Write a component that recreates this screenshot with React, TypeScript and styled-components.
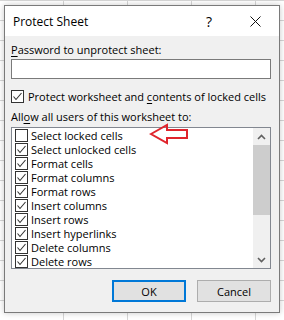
import React from "react";
import styled, { createGlobalStyle } from "styled-components";

const Global = createGlobalStyle`
  html, body { margin: 0; padding: 0; }
  body {
    font-family: "Open Sans", "Noto Sans", sans-serif;
    font-size: 11px;
    color: #000;
    background-color: #ffffff;
    background-image:
      linear-gradient(to right, #d6d6d6 1px, transparent 1px),
      linear-gradient(to bottom, #d6d6d6 1px, transparent 1px);
    background-size: 64px 20px;
    background-position: 63px 0;
  }
`;

const Page = styled.div`
  width: 284px;
  height: 320px;
  padding: 5px 0 0 4px;
  box-sizing: border-box;
  overflow: hidden;
`;

const Dialog = styled.div`
  width: 276px;
  height: 308px;
  box-sizing: border-box;
  border: 1px solid #7a7a7a;
  background: #f0f0f0;
  box-shadow: 0 0 6px rgba(0, 0, 0, 0.22);
  display: flex;
  flex-direction: column;
`;

const TitleBar = styled.div`
  height: 30px;
  background: #ffffff;
  display: flex;
  align-items: center;
  padding-left: 8px;
  padding-top: 1px;
  box-sizing: border-box;
`;

const Title = styled.div`
  flex: 1;
  font-size: 12px;
`;

const HelpButton = styled.div`
  width: 30px;
  margin-right: 8px;
  text-align: center;
  font-size: 14px;
`;

const CloseButton = styled.div`
  width: 46px;
  margin-right: 1px;
  display: flex;
  align-items: center;
  justify-content: center;
`;

const Body = styled.div`
  flex: 1;
  display: flex;
  flex-direction: column;
  padding: 7px 8px 0 6px;
`;

const Label = styled.div<{ $mt?: number }>`
  height: 14px;
  line-height: 14px;
  margin-top: ${(p) => p.$mt ?? 0}px;
  white-space: nowrap;
`;

const Key = styled.span`
  text-decoration: underline;
  text-underline-offset: 2px;
`;

const TextInput = styled.div`
  margin-top: 2px;
  height: 20px;
  box-sizing: border-box;
  border: 1px solid #7a7a7a;
  background: #ffffff;
`;

const CheckRow = styled.div`
  margin-top: 9px;
  height: 16px;
  display: flex;
  align-items: center;
  gap: 4px;
  white-space: nowrap;
`;

const Box = styled.span`
  width: 13px;
  height: 13px;
  box-sizing: border-box;
  border: 1px solid #333333;
  background: #ffffff;
  flex: none;
  display: flex;
  align-items: center;
  justify-content: center;
`;

const ListBox = styled.div`
  position: relative;
  margin-top: 3px;
  height: 142px;
  box-sizing: border-box;
  border: 1px solid #828790;
  background: #ffffff;
  display: flex;
`;

const Items = styled.div`
  flex: 1;
  display: flex;
  flex-direction: column;
`;

const Item = styled.div`
  height: 14px;
  display: flex;
  align-items: center;
  gap: 3px;
  padding-left: 3px;
  white-space: nowrap;
`;

const ScrollBar = styled.div`
  width: 17px;
  background: #f0f0f0;
  display: flex;
  flex-direction: column;
`;

const ScrollArrow = styled.div`
  height: 17px;
  display: flex;
  align-items: center;
  justify-content: center;
`;

const Track = styled.div`
  flex: 1;
  display: flex;
  flex-direction: column;
`;

const Thumb = styled.div`
  height: 70px;
  background: #cdcdcd;
`;

const Pointer = styled.svg`
  position: absolute;
  left: 137px;
  top: -5px;
`;

const ButtonRow = styled.div`
  margin-top: 11px;
  display: flex;
  justify-content: flex-end;
  gap: 11px;
`;

const Button = styled.div<{ $default?: boolean }>`
  width: 74px;
  height: 22px;
  box-sizing: border-box;
  border: ${(p) => (p.$default ? "2px solid #0078d7" : "1px solid #adadad")};
  background: #e1e1e1;
  display: flex;
  align-items: center;
  justify-content: center;
`;

const Check = () => (
  <svg width="11" height="11" viewBox="0 0 11 11">
    <polyline points="1.5,5.5 4,8.5 9.5,2" fill="none" stroke="#333" strokeWidth="1.1" />
  </svg>
);

const items: [string, boolean][] = [
  ["Select locked cells", false],
  ["Select unlocked cells", true],
  ["Format cells", true],
  ["Format columns", true],
  ["Format rows", true],
  ["Insert columns", true],
  ["Insert rows", true],
  ["Insert hyperlinks", true],
  ["Delete columns", true],
  ["Delete rows", true],
];

export default function App() {
  return (
    <>
      <Global />
      <Page>
        <Dialog>
          <TitleBar>
            <Title>Protect Sheet</Title>
            <HelpButton>?</HelpButton>
            <CloseButton>
              <svg width="11" height="11" viewBox="0 0 11 11">
                <path d="M0.5,0.5 L10.5,10.5 M10.5,0.5 L0.5,10.5" stroke="#111" strokeWidth="1" />
              </svg>
            </CloseButton>
          </TitleBar>
          <Body>
            <Label>
              <Key>P</Key>assword to unprotect sheet:
            </Label>
            <TextInput />
            <CheckRow>
              <Box>
                <Check />
              </Box>
              <span>
                Protect worksheet and <Key>c</Key>ontents of locked cells
              </span>
            </CheckRow>
            <Label $mt={6}>
              All<Key>o</Key>w all users of this worksheet to:
            </Label>
            <ListBox>
              <Items>
                {items.map(([t, c]) => (
                  <Item key={t}>
                    <Box>{c && <Check />}</Box>
                    <span>{t}</span>
                  </Item>
                ))}
              </Items>
              <ScrollBar>
                <ScrollArrow>
                  <svg width="9" height="6" viewBox="0 0 9 6">
                    <polyline points="1,5 4.5,1.5 8,5" fill="none" stroke="#606060" strokeWidth="1.6" />
                  </svg>
                </ScrollArrow>
                <Track>
                  <Thumb />
                </Track>
                <ScrollArrow>
                  <svg width="9" height="6" viewBox="0 0 9 6">
                    <polyline points="1,1 4.5,4.5 8,1" fill="none" stroke="#606060" strokeWidth="1.6" />
                  </svg>
                </ScrollArrow>
              </ScrollBar>
              <Pointer width="42" height="22" viewBox="0 0 42 22">
                <path
                  d="M2,11 L18,2 L18,7 L38,7 L38,15 L18,15 L18,20 Z"
                  fill="none"
                  stroke="#e0242c"
                  strokeWidth="2"
                  strokeLinejoin="miter"
                />
              </Pointer>
            </ListBox>
            <ButtonRow>
              <Button $default>OK</Button>
              <Button>Cancel</Button>
            </ButtonRow>
          </Body>
        </Dialog>
      </Page>
    </>
  );
}
